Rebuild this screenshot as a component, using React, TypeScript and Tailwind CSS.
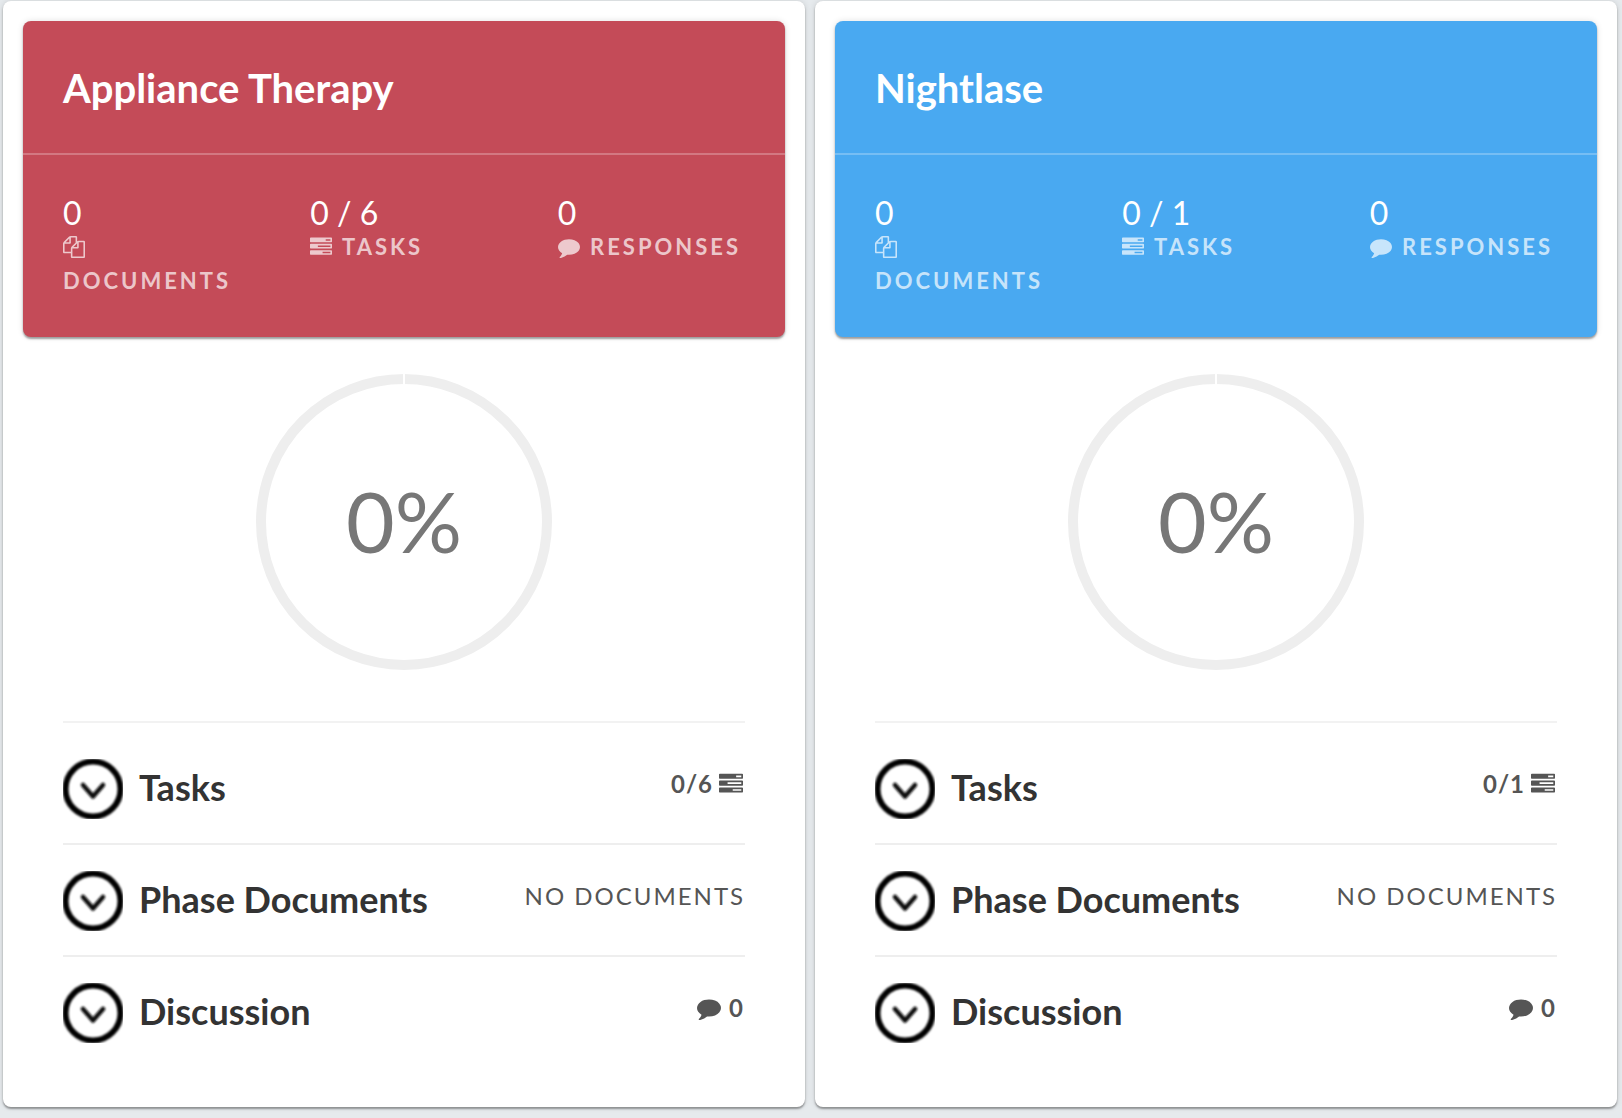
import React, { useState } from "react";

const FILES =
  "M1696 384q40 0 68 28t28 68v1216q0 40-28 68t-68 28h-960q-40 0-68-28t-28-68v-288h-544q-40 0-68-28t-28-68v-672q0-40 20-88t48-76l408-408q28-28 76-48t88-20h416q40 0 68 28t28 68v328q68-40 128-40h416zm-544 213l-299 299h299v-299zm-640-384l-299 299h299v-299zm196 647l316-316v-416h-384v416q0 40-28 68t-68 28h-416v640h512v-256q0-40 20-88t48-76zm956 804v-1152h-384v416q0 40-28 68t-68 28h-416v640h896z";
const TASKS =
  "M1024 1408h640v-128h-640v128zm-384-512h1024v-128h-1024v128zm640-512h384v-128h-384v128zm512 832v256q0 26-19 45t-45 19h-1664q-26 0-45-19t-19-45v-256q0-26 19-45t45-19h1664q26 0 45 19t19 45zm0-512v256q0 26-19 45t-45 19h-1664q-26 0-45-19t-19-45v-256q0-26 19-45t45-19h1664q26 0 45 19t19 45zm0-512v256q0 26-19 45t-45 19h-1664q-26 0-45-19t-19-45v-256q0-26 19-45t45-19h1664q26 0 45 19t19 45z";
const COMMENT =
  "M1792 896q0 174-120 321.5t-326 233-450 85.5q-70 0-145-8-198 175-460 242-49 14-114 22-17 2-30.5-9t-17.5-29v-1q-3-4-.5-12t2-10 4.5-9.5l6-9 7-8.5 8-9q7-8 31-34.5t34.5-38 31-39.5 32.5-51 27-59 26-76q-157-89-247.5-220t-90.5-281q0-130 71-248.5t191-204.5 286-136.5 348-50.5q244 0 450 85.5t326 233 120 321.5z";

function Glyph({ d }: { d: string }) {
  return (
    <svg
      viewBox="0 0 1792 1792"
      fill="currentColor"
      aria-hidden="true"
      className="mr-[2px] inline-block size-[1em] align-[-3px]"
    >
      <path d={d} />
    </svg>
  );
}

function ChevronCircle() {
  return (
    <svg viewBox="0 0 60 60" aria-hidden="true" className="size-[60px] shrink-0">
      <filter id="soften" x="-10%" y="-10%" width="120%" height="120%">
        <feGaussianBlur stdDeviation="0.8" />
      </filter>
      <g filter="url(#soften)" fill="none" stroke="#000">
        <circle cx="30" cy="30" r="27.5" strokeWidth="6" />
        <path
          d="M20 26 30 37.5 40 26"
          stroke="#111"
          strokeWidth="4.5"
          strokeLinecap="round"
          strokeLinejoin="round"
        />
      </g>
    </svg>
  );
}

function Stat({ value, icon, label }: { value: string; icon: string; label: string }) {
  return (
    <div className="px-[30px]">
      <div className="text-[32px] leading-[34px]">{value}</div>
      <div className="text-[22px] leading-[34px] font-bold tracking-[3px] text-white/70 uppercase">
        <Glyph d={icon} /> {label}
      </div>
    </div>
  );
}

function ProgressRing({ percent }: { percent: number }) {
  return (
    <div className="mx-auto mt-[35px] grid size-[300px] place-items-center">
      <svg viewBox="0 0 300 300" aria-hidden="true" className="col-start-1 row-start-1 size-full">
        <circle cx="150" cy="150" r="143" fill="none" stroke="#eee" strokeWidth="10" />
        <path d="M150 0V14" stroke="#fff" strokeWidth="2" />
      </svg>
      <span className="col-start-1 row-start-1 pb-[2px] text-[84px] leading-[100px] text-[#777]">{percent}%</span>
    </div>
  );
}

function Row({ title, children }: { title: string; children: React.ReactNode }) {
  const [open, setOpen] = useState(false);
  return (
    <li className="flex items-start justify-between border-b-2 border-[#eee] pt-[26px] pb-6 last:border-b-0">
      <button
        type="button"
        aria-expanded={open}
        onClick={() => setOpen(!open)}
        className="flex cursor-pointer items-start gap-4 text-left"
      >
        <ChevronCircle />
        <span className="text-[36px] leading-[56px] font-bold text-[#333]">{title}</span>
      </button>
      <span className="text-2xl leading-[50px] text-[#555]">{children}</span>
    </li>
  );
}

type Phase = { name: string; done: number; total: number; tone: string };

function PhaseCard({ name, done, total, tone }: Phase) {
  return (
    <article className="rounded-lg bg-white p-5 shadow-[0_2px_2px_rgba(0,0,0,0.35),0_0_6px_rgba(0,0,0,0.12)]">
      <header
        className={`rounded-lg text-white shadow-[0_2px_2px_rgba(0,0,0,0.35),0_0_6px_rgba(0,0,0,0.12)] ${tone}`}
      >
        <h2 className="border-b-2 border-white/25 px-10 pt-[43px] pb-[41px] text-[40px] leading-[48px] font-bold">
          {name}
        </h2>
        <div className="grid grid-cols-3 px-[10px] pt-[41px] pb-[39px]">
          <Stat value="0" icon={FILES} label="Documents" />
          <Stat value={`${done} / ${total}`} icon={TASKS} label="Tasks" />
          <Stat value="0" icon={COMMENT} label="Responses" />
        </div>
      </header>
      <ProgressRing percent={0} />
      <ul className="mx-10 mt-[49px] border-t-2 border-[#f2f2f2] pt-[10px]">
        <Row title="Tasks">
          <span className="flex items-center gap-1.5 font-bold">
            <span className="tracking-[1px]">
              {done}/{total}
            </span>
            <Glyph d={TASKS} />
          </span>
        </Row>
        <Row title="Phase Documents">
          <span className="tracking-[2px]">NO DOCUMENTS</span>
        </Row>
        <Row title="Discussion">
          <span className="flex items-center gap-1.5 pr-[2px] font-bold">
            <Glyph d={COMMENT} />
            <span>0</span>
          </span>
        </Row>
      </ul>
      <div className="h-5" />
    </article>
  );
}

const PHASES: Phase[] = [
  { name: "Appliance Therapy", done: 0, total: 6, tone: "bg-[#c44b58]" },
  { name: "Nightlase", done: 0, total: 1, tone: "bg-[#49a9f1]" },
];

export default function App() {
  return (
    <main className="min-h-screen bg-[#e6eaed] pt-px pr-[5px] pb-[11px] pl-[3px] font-['Lato',sans-serif]">
      <div className="grid grid-cols-2 items-start gap-[10px]">
        {PHASES.map((p) => (
          <PhaseCard key={p.name} {...p} />
        ))}
      </div>
    </main>
  );
}
